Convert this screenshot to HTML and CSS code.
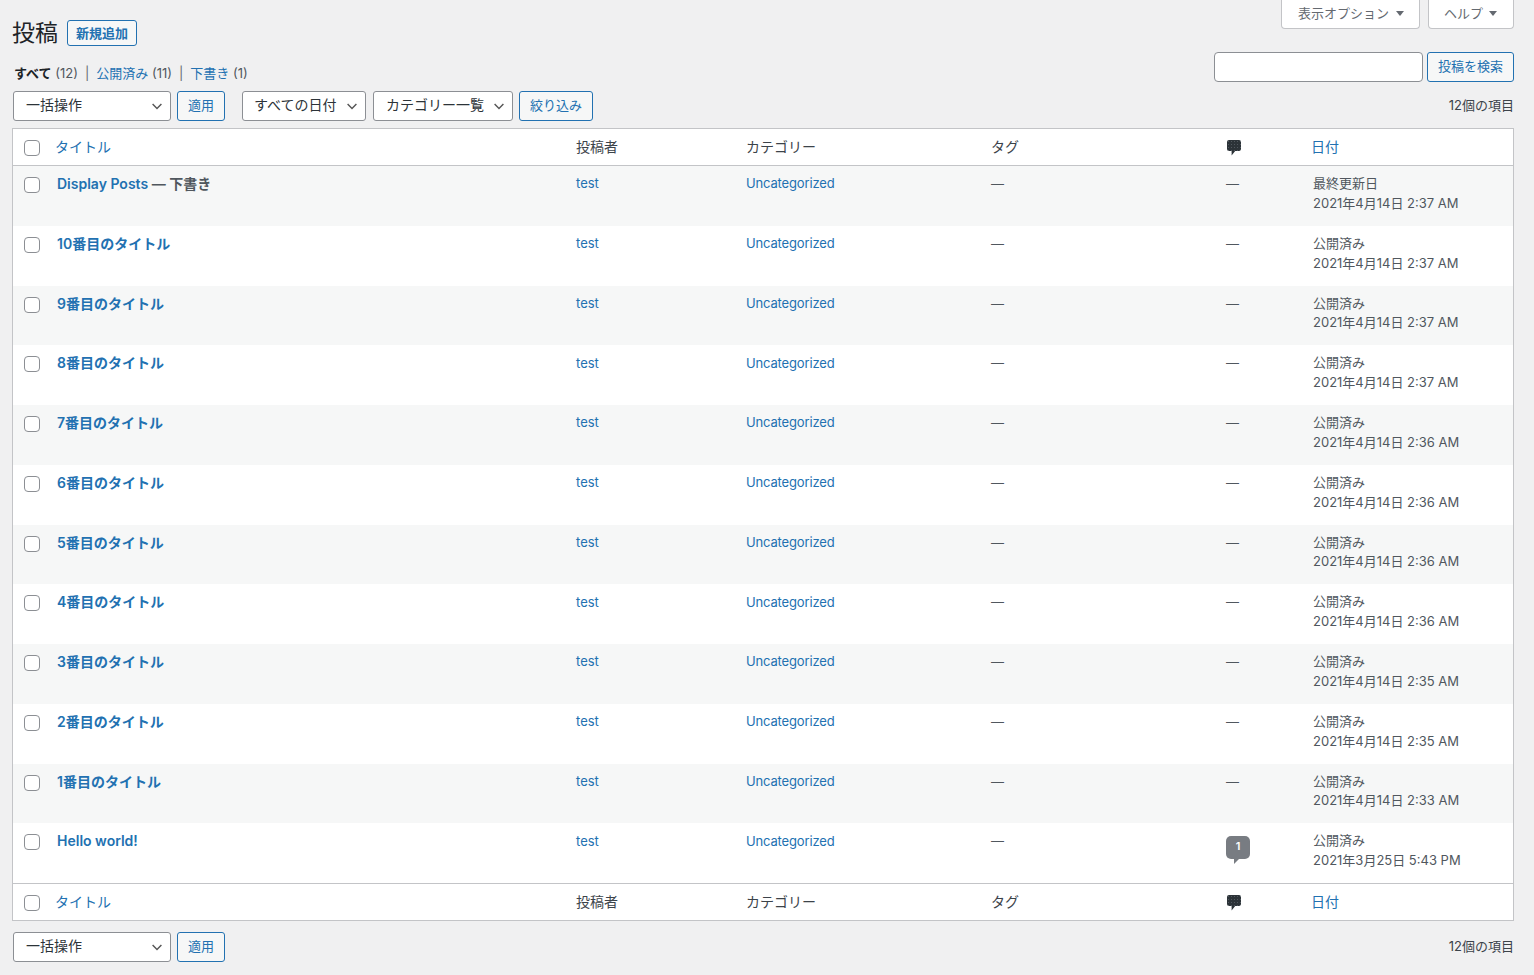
FILE: index.html
```html
<!DOCTYPE html>
<html lang="ja">
<head>
<meta charset="utf-8">
<title>投稿</title>
<link rel="stylesheet" href="styles.css">
</head>
<body>
<div class="wrap">
  <div class="meta-tabs">
    <button class="meta-tab">表示オプション<span class="tri"></span></button>
    <button class="meta-tab">ヘルプ<span class="tri"></span></button>
  </div>
  <div class="heading">
    <h1>投稿</h1>
    <a class="btn add-new" href="#">新規追加</a>
  </div>
  <div class="filter-row">
    <ul class="subsubsub">
      <li><b>すべて</b> <span class="cnt">(12)</span><i>|</i></li>
      <li><a href="#">公開済み</a> <span class="cnt">(11)</span><i>|</i></li>
      <li><a href="#">下書き</a> <span class="cnt">(1)</span></li>
    </ul>
    <div class="search">
      <input class="search-input" type="text" aria-label="検索">
      <button class="btn">投稿を検索</button>
    </div>
  </div>
  <div class="tablenav top">
    <select class="sel bulk"><option>一括操作</option></select>
    <button class="btn">適用</button>
    <select class="sel dates"><option>すべての日付</option></select>
    <select class="sel cats"><option>カテゴリー一覧</option></select>
    <button class="btn">絞り込み</button>
    <span class="num">12個の項目</span>
  </div>
  <table class="posts">
    <colgroup><col class="c-cb"><col class="c-title"><col class="c-author"><col class="c-cat"><col class="c-tag"><col class="c-com"><col class="c-date"></colgroup>
    <thead>
      <tr>
        <th class="cb"><input type="checkbox" class="check" aria-label="すべて選択"></th>
        <th><a href="#">タイトル</a></th><th>投稿者</th><th>カテゴリー</th><th>タグ</th>
        <th class="com"><svg class="bubble" viewBox="0 0 14 16"><defs><pattern id="dots-top" width="3" height="3" patternUnits="userSpaceOnUse"><rect width="3" height="3" fill="#2c3338"/><rect x="1" y="1" width="1" height="1" fill="#50575e"/></pattern></defs><path fill="url(#dots-top)" d="M2 0h10a2 2 0 0 1 2 2v7a2 2 0 0 1-2 2H8.2L4.6 15.5V11H2a2 2 0 0 1-2-2V2a2 2 0 0 1 2-2z"/></svg></th>
        <th class="date-h"><a href="#">日付</a></th>
      </tr>
    </thead>
    <tbody>
      <tr><td class="cb"><input type="checkbox" class="check" aria-label="選択"></td><td class="title"><a href="#">Display Posts</a><span class="state"> — 下書き</span></td><td class="plain"><a href="#">test</a></td><td class="plain"><a class="cat" href="#">Uncategorized</a></td><td class="plain dash">—</td><td class="plain dash">—</td><td class="date">最終更新日<br>2021年4月14日 2:37 AM</td></tr>
      <tr><td class="cb"><input type="checkbox" class="check" aria-label="選択"></td><td class="title"><a href="#">10番目のタイトル</a></td><td class="plain"><a href="#">test</a></td><td class="plain"><a class="cat" href="#">Uncategorized</a></td><td class="plain dash">—</td><td class="plain dash">—</td><td class="date">公開済み<br>2021年4月14日 2:37 AM</td></tr>
      <tr><td class="cb"><input type="checkbox" class="check" aria-label="選択"></td><td class="title"><a href="#">9番目のタイトル</a></td><td class="plain"><a href="#">test</a></td><td class="plain"><a class="cat" href="#">Uncategorized</a></td><td class="plain dash">—</td><td class="plain dash">—</td><td class="date">公開済み<br>2021年4月14日 2:37 AM</td></tr>
      <tr><td class="cb"><input type="checkbox" class="check" aria-label="選択"></td><td class="title"><a href="#">8番目のタイトル</a></td><td class="plain"><a href="#">test</a></td><td class="plain"><a class="cat" href="#">Uncategorized</a></td><td class="plain dash">—</td><td class="plain dash">—</td><td class="date">公開済み<br>2021年4月14日 2:37 AM</td></tr>
      <tr><td class="cb"><input type="checkbox" class="check" aria-label="選択"></td><td class="title"><a href="#">7番目のタイトル</a></td><td class="plain"><a href="#">test</a></td><td class="plain"><a class="cat" href="#">Uncategorized</a></td><td class="plain dash">—</td><td class="plain dash">—</td><td class="date">公開済み<br>2021年4月14日 2:36 AM</td></tr>
      <tr><td class="cb"><input type="checkbox" class="check" aria-label="選択"></td><td class="title"><a href="#">6番目のタイトル</a></td><td class="plain"><a href="#">test</a></td><td class="plain"><a class="cat" href="#">Uncategorized</a></td><td class="plain dash">—</td><td class="plain dash">—</td><td class="date">公開済み<br>2021年4月14日 2:36 AM</td></tr>
      <tr><td class="cb"><input type="checkbox" class="check" aria-label="選択"></td><td class="title"><a href="#">5番目のタイトル</a></td><td class="plain"><a href="#">test</a></td><td class="plain"><a class="cat" href="#">Uncategorized</a></td><td class="plain dash">—</td><td class="plain dash">—</td><td class="date">公開済み<br>2021年4月14日 2:36 AM</td></tr>
      <tr><td class="cb"><input type="checkbox" class="check" aria-label="選択"></td><td class="title"><a href="#">4番目のタイトル</a></td><td class="plain"><a href="#">test</a></td><td class="plain"><a class="cat" href="#">Uncategorized</a></td><td class="plain dash">—</td><td class="plain dash">—</td><td class="date">公開済み<br>2021年4月14日 2:36 AM</td></tr>
      <tr><td class="cb"><input type="checkbox" class="check" aria-label="選択"></td><td class="title"><a href="#">3番目のタイトル</a></td><td class="plain"><a href="#">test</a></td><td class="plain"><a class="cat" href="#">Uncategorized</a></td><td class="plain dash">—</td><td class="plain dash">—</td><td class="date">公開済み<br>2021年4月14日 2:35 AM</td></tr>
      <tr><td class="cb"><input type="checkbox" class="check" aria-label="選択"></td><td class="title"><a href="#">2番目のタイトル</a></td><td class="plain"><a href="#">test</a></td><td class="plain"><a class="cat" href="#">Uncategorized</a></td><td class="plain dash">—</td><td class="plain dash">—</td><td class="date">公開済み<br>2021年4月14日 2:35 AM</td></tr>
      <tr><td class="cb"><input type="checkbox" class="check" aria-label="選択"></td><td class="title"><a href="#">1番目のタイトル</a></td><td class="plain"><a href="#">test</a></td><td class="plain"><a class="cat" href="#">Uncategorized</a></td><td class="plain dash">—</td><td class="plain dash">—</td><td class="date">公開済み<br>2021年4月14日 2:33 AM</td></tr>
      <tr><td class="cb"><input type="checkbox" class="check" aria-label="選択"></td><td class="title"><a href="#">Hello world!</a></td><td class="plain"><a href="#">test</a></td><td class="plain"><a class="cat" href="#">Uncategorized</a></td><td class="plain dash">—</td><td class="has-badge"><span class="badge">1</span></td><td class="date">公開済み<br>2021年3月25日 5:43 PM</td></tr>
    </tbody>
    <tfoot>
      <tr>
        <th class="cb"><input type="checkbox" class="check" aria-label="すべて選択"></th>
        <th><a href="#">タイトル</a></th><th>投稿者</th><th>カテゴリー</th><th>タグ</th>
        <th class="com"><svg class="bubble" viewBox="0 0 14 16"><defs><pattern id="dots-bottom" width="3" height="3" patternUnits="userSpaceOnUse"><rect width="3" height="3" fill="#2c3338"/><rect x="1" y="1" width="1" height="1" fill="#50575e"/></pattern></defs><path fill="url(#dots-bottom)" d="M2 0h10a2 2 0 0 1 2 2v7a2 2 0 0 1-2 2H8.2L4.6 15.5V11H2a2 2 0 0 1-2-2V2a2 2 0 0 1 2-2z"/></svg></th>
        <th class="date-h"><a href="#">日付</a></th>
      </tr>
    </tfoot>
  </table>
  <div class="tablenav bottom">
    <select class="sel bulk"><option>一括操作</option></select>
    <button class="btn">適用</button>
    <span class="num">12個の項目</span>
  </div>
</div>
</body>
</html>
```
FILE: styles.css
```css
* { box-sizing: border-box; }
html, body { margin: 0; padding: 0; height: 975px; overflow: hidden; }
body {
  background: #f0f0f1;
  color: #3c434a;
  font-family: Inter, "Noto Sans CJK JP", sans-serif;
  font-size: 13px;
  line-height: 19.5px;
}
a { color: #2271b1; text-decoration: none; }
.wrap { padding: 0 20px 0 12px; }

.meta-tabs { display: flex; justify-content: flex-end; gap: 8px; height: 29px; margin-top: -1px; }
.meta-tab {
  height: 30px; padding: 0 16px 1px; margin: 0;
  background: #fff; border: 1px solid #c3c4c7; border-top: 0;
  border-radius: 0 0 4px 4px;
  color: #646970; font: inherit; line-height: 28px; white-space: nowrap;
  display: flex; align-items: center;
}
.meta-tab .tri {
  flex: none; width: 0; height: 0; margin-left: 7px;
  border-left: 4px solid transparent; border-right: 4px solid transparent; border-top: 5px solid #646970;
}
.meta-tab:first-child { width: 139px; }
.meta-tab:last-child { width: 86px; padding-left: 15px; }
.meta-tab:last-child .tri { margin-left: 6px; }

.heading { display: flex; align-items: center; height: 26px; margin-top: -8px; }
.heading h1 { margin: 0 9px 0 0; font-size: 23px; font-weight: 400; line-height: 26px; color: #1d2327; }
.btn {
  display: inline-flex; align-items: center; justify-content: center;
  height: 30px; padding: 0 10px 2px; margin: 0;
  background: #f6f7f7; border: 1px solid #2271b1; border-radius: 3px;
  color: #2271b1; font: inherit; line-height: 26px; white-space: nowrap;
}
.add-new { height: 26px; width: 70px; padding: 0; font-weight: 600; font-size: 13px; }

.filter-row { display: flex; justify-content: space-between; height: 30px; margin-top: 6px; }
.subsubsub { display: flex; list-style: none; margin: 0; padding: 12px 0 0 2px; color: #646970; font-size: 13px; }
.subsubsub b { color: #1d2327; font-weight: 600; }
.subsubsub i { font-style: normal; padding: 0 7px; color: #646970; }
.subsubsub .cnt { color: #50575e; }
.search { display: flex; gap: 4px; }
.search-input { width: 209px; height: 30px; margin: 0; background: #fff; border: 1px solid #8c8f94; border-radius: 4px; }

.tablenav { display: flex; align-items: center; gap: 6px; height: 30px; padding-left: 1px; }
.tablenav.top { margin-top: 9px; }
.tablenav.bottom { margin-top: 11px; }
.num { margin-left: auto; color: #3c434a; }
.sel {
  -webkit-appearance: none; appearance: none;
  height: 30px; margin: 0; padding: 0 24px 2px 12px;
  background: #fff url("data:image/svg+xml,%3Csvg xmlns='http://www.w3.org/2000/svg' width='20' height='20' viewBox='0 0 20 20'%3E%3Cpath d='M4.5 7.5l5.5 5.5 5.5-5.5' fill='none' stroke='%23555' stroke-width='1.8'/%3E%3C/svg%3E") no-repeat right 5px top 6px / 16px 16px;
  border: 1px solid #8c8f94; border-radius: 3px;
  color: #2c3338; font: inherit; font-size: 14px; line-height: 26px;
}
.bulk { width: 158px; }
.dates { width: 124px; margin: 0 1px 0 11px; padding-left: 11px; }
.cats { width: 140px; }

.posts {
  width: 1502px; margin-top: 7px; table-layout: fixed; border-collapse: separate; border-spacing: 0;
  background: #fff; border: 1px solid #c3c4c7;
}
.c-cb { width: 34px; } .c-title { width: 521px; } .c-author { width: 170px; }
.c-cat { width: 245px; } .c-tag { width: 235px; } .c-com { width: 87px; } .c-date { width: 208px; }
.posts th { height: 37px; padding: 0 8px; font-size: 14px; font-weight: 400; text-align: left; color: #3c434a; }
.posts thead th { border-bottom: 1px solid #c3c4c7; }
.posts thead th:not(.cb):not(.com) { padding-bottom: 1px; }
.posts tfoot th { border-top: 1px solid #c3c4c7; }
.posts td { height: 59.75px; padding: 8px; vertical-align: top; color: #50575e; }
.posts td.plain { padding-top: 8.4px; }
.posts td.dash { padding-top: 9px; }
.posts td.date { line-height: 19.8px; }
.cat { letter-spacing: -0.15px; }
.posts tbody tr:nth-child(odd) td { background: #f6f7f7; }
.posts th.cb { padding: 2px 0 0 11px; vertical-align: middle; }
.posts td.cb { padding: 11px 0 0 11px; vertical-align: top; }
.check {
  -webkit-appearance: none; appearance: none; display: block;
  width: 16px; height: 16px; margin: 0; background: #fff;
  border: 1px solid #8c8f94; border-radius: 4px;
}
.posts td.title { font-size: 14px; font-weight: 600; padding-left: 10px; }
.state { color: #50575e; }
.posts th.com { padding-left: 9px; }
.bubble { display: block; width: 14px; height: 16px; margin-top: 2px; }
.posts th.date-h { padding-left: 6px; }
.badge {
  position: relative; display: block; width: 24px; height: 23px; margin-top: 5px;
  background: #787c82; border-radius: 5px; color: #fff;
  font-size: 11px; font-weight: 600; line-height: 20px; text-align: center;
}
.badge::after {
  content: ""; position: absolute; left: 8px; top: 23px;
  border-top: 5px solid #787c82; border-right: 5px solid transparent;
}
```
